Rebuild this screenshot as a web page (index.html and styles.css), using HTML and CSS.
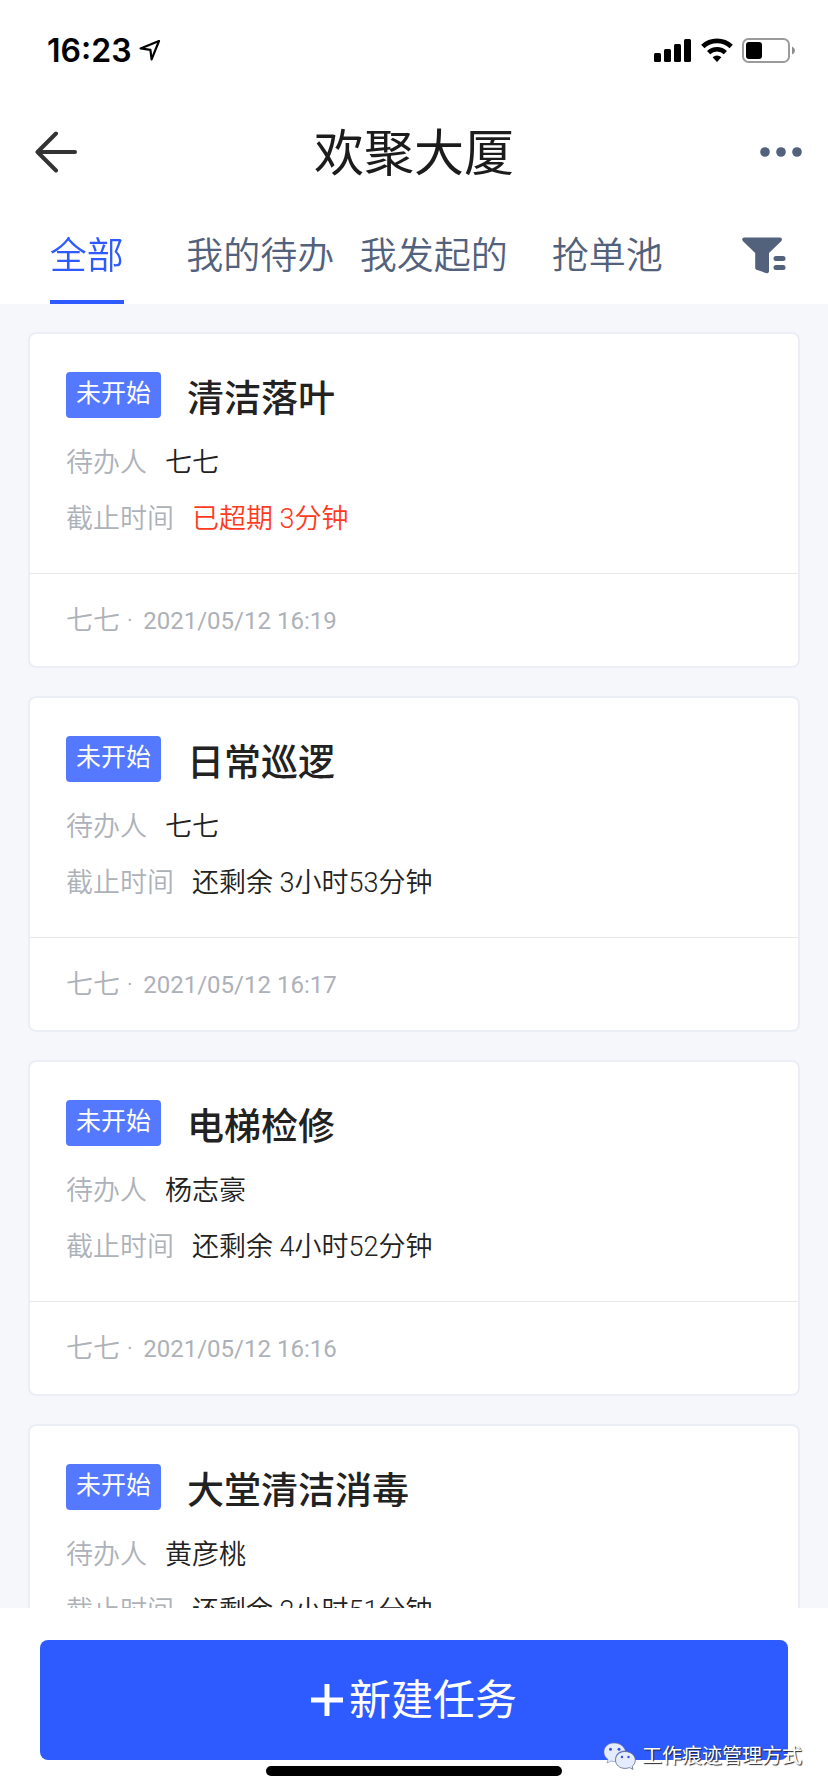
FILE: index.html
```html
<!DOCTYPE html>
<html lang="zh-CN">
<head>
    <meta charset="UTF-8">
    <meta name="viewport" content="width=device-width, initial-scale=1.0">
    <title>欢聚大厦</title>
    <link rel="stylesheet" href="styles.css">
</head>
<body>

    <!-- 状态栏 -->
    <div class="status-bar">
        <div class="status-left">
            <span class="clock">16:23</span>
            <svg width="22" height="22" viewBox="0 0 22 22" fill="none" stroke="#000" stroke-width="2.2" stroke-linejoin="round">
                <path d="M20 2L1.6 9.4L11.4 10.8L12.6 20.4Z"/>
            </svg>
        </div>
        <div class="status-right">
            <svg width="38" height="24" viewBox="0 0 38 24">
                <rect x="0" y="15" width="7" height="9" rx="1.5"/>
                <rect x="10" y="11" width="7" height="13" rx="1.5"/>
                <rect x="20" y="6" width="7" height="18" rx="1.5"/>
                <rect x="30" y="1" width="7" height="23" rx="1.5"/>
            </svg>
            <svg width="32" height="24" viewBox="0 0 32 24">
                <path d="M1.8 8.6A20.5 20.5 0 0 1 30.2 8.6" fill="none" stroke="#000" stroke-width="4.8"/>
                <path d="M7.6 14.6A12.2 12.2 0 0 1 24.4 14.6" fill="none" stroke="#000" stroke-width="4.6"/>
                <path d="M11.6 19.2A6.5 6.5 0 0 1 20.4 19.2L16 24Z"/>
            </svg>
            <svg width="53" height="25" viewBox="0 0 53 25">
                <rect x="1" y="1" width="46" height="23" rx="5.5" fill="none" stroke="#9b9b9b" stroke-width="2"/>
                <rect x="4" y="4" width="16" height="17" rx="3"/>
                <path d="M50 8.5Q53 10 53 12.5Q53 15 50 16.5Z" fill="#8c8c8c"/>
            </svg>
        </div>
    </div>

    <!-- 标题栏 -->
    <header class="nav-bar">
        <button class="icon-button" type="button" aria-label="返回">
            <svg width="42" height="42" viewBox="0 0 42 42" fill="none" stroke="#333" stroke-width="4" stroke-linecap="round" stroke-linejoin="round">
                <path d="M21 2.5L2.5 21L21 39.5M2.5 21H40"/>
            </svg>
        </button>
        <h1>欢聚大厦</h1>
        <button class="icon-button" type="button" aria-label="更多">
            <svg width="42" height="42" viewBox="0 0 42 42" fill="#52617c">
                <circle cx="5" cy="21" r="4.8"/>
                <circle cx="21" cy="21" r="4.8"/>
                <circle cx="37" cy="21" r="4.8"/>
            </svg>
        </button>
    </header>

    <!-- 分类标签 -->
    <nav class="tabs">
        <a class="tab active" href="#all">全部</a>
        <a class="tab" href="#todo">我的待办</a>
        <a class="tab" href="#created">我发起的</a>
        <a class="tab" href="#pool">抢单池</a>
        <button class="filter" type="button" aria-label="筛选">
            <svg width="44" height="37" viewBox="0 0 44 37" fill="#52617c">
                <path d="M2 0.5H38Q41 1 39.4 4L27 16V34.5Q26.6 36.8 24.5 36.2L14.5 32.8Q13.2 32.2 13.2 31V16L0.8 4Q-0.8 1 2 0.5Z"/>
                <rect x="31.5" y="19" width="12" height="5" rx="2.5"/>
                <rect x="31.5" y="28" width="12" height="5" rx="2.5"/>
            </svg>
        </button>
    </nav>

    <!-- 任务列表 -->
    <main class="task-list">
        <article class="card">
            <div class="card-body">
                <div class="card-head">
                    <span class="tag">未开始</span>
                    <h2>清洁落叶</h2>
                </div>
                <p class="row"><span class="label">待办人</span><span>七七</span></p>
                <p class="row"><span class="label">截止时间</span><span class="overdue">已超期 3分钟</span></p>
            </div>
            <footer class="card-foot"><span>七七 ·</span><time>2021/05/12 16:19</time></footer>
        </article>

        <article class="card">
            <div class="card-body">
                <div class="card-head">
                    <span class="tag">未开始</span>
                    <h2>日常巡逻</h2>
                </div>
                <p class="row"><span class="label">待办人</span><span>七七</span></p>
                <p class="row"><span class="label">截止时间</span><span>还剩余 3小时53分钟</span></p>
            </div>
            <footer class="card-foot"><span>七七 ·</span><time>2021/05/12 16:17</time></footer>
        </article>

        <article class="card">
            <div class="card-body">
                <div class="card-head">
                    <span class="tag">未开始</span>
                    <h2>电梯检修</h2>
                </div>
                <p class="row"><span class="label">待办人</span><span>杨志豪</span></p>
                <p class="row"><span class="label">截止时间</span><span>还剩余 4小时52分钟</span></p>
            </div>
            <footer class="card-foot"><span>七七 ·</span><time>2021/05/12 16:16</time></footer>
        </article>

        <article class="card">
            <div class="card-body">
                <div class="card-head">
                    <span class="tag">未开始</span>
                    <h2>大堂清洁消毒</h2>
                </div>
                <p class="row"><span class="label">待办人</span><span>黄彦桃</span></p>
                <p class="row"><span class="label">截止时间</span><span>还剩余 2小时51分钟</span></p>
            </div>
        </article>
    </main>

    <!-- 底部操作 -->
    <div class="bottom-bar">
        <button class="create-button" type="button">
            <svg width="32" height="32" viewBox="0 0 32 32" stroke="#fff" stroke-width="5">
                <path d="M16 0V32M0 16H32"/>
            </svg>
            <span>新建任务</span>
        </button>
        <div class="home-indicator"></div>
        <div class="watermark">
            <svg width="33" height="28" viewBox="0 0 33 28">
                <path d="M11 1C5 1 1 5 1 10C1 13.2 2.6 15.6 5 17.3L4 21L8 19Q11 20 13.5 19.2C11 12 17 8.6 22.4 9C21 4 16.5 1 11 1Z" fill="#e6ecff" stroke="#7382a8" stroke-width="0.6"/>
                <path d="M22 9.5C16.5 9.5 12.5 13.2 12.5 18C12.5 22.8 16.5 26.4 22 26.4Q24.5 26.4 26.5 25.6L30 27.4L29.2 24.2C31.3 22.6 32.3 20.4 32.3 18C32.3 13.2 27.5 9.5 22 9.5Z" fill="#e6ecff" stroke="#5d6885" stroke-width="0.8"/>
                <g fill="#2f56dc">
                    <circle cx="7.5" cy="7.3" r="1.5"/>
                    <circle cx="16" cy="7.3" r="1.5"/>
                    <circle cx="19" cy="15" r="1.2"/>
                    <circle cx="25.5" cy="15" r="1.2"/>
                </g>
            </svg>
            <span>工作痕迹管理方式</span>
        </div>
    </div>

</body>
</html>
```
FILE: styles.css
```css
/* 基础样式 */
* {
    box-sizing: border-box;
}

body {
    margin: 0;
    height: 100vh;
    display: flex;
    flex-direction: column;
    background: #fff;
    color: #222;
    font-family: Roboto, "Noto Sans CJK SC", sans-serif;
    font-weight: 350;
}

h1, h2, p {
    margin: 0;
}

svg {
    display: block;
    flex: none;
}

button {
    padding: 0;
    border: 0;
    background: none;
    font: inherit;
    cursor: pointer;
}

/* 状态栏 */
.status-bar {
    height: 100px;
    padding: 0 33px 0 47px;
    display: flex;
    justify-content: space-between;
    align-items: center;
}

.status-left {
    display: flex;
    align-items: center;
    gap: 7px;
}

.status-right {
    display: flex;
    align-items: center;
    gap: 9px;
}

.clock {
    font-family: Inter, sans-serif;
    font-size: 32px;
    font-weight: 600;
    color: #000;
}

/* 标题栏 */
.nav-bar {
    height: 104px;
    padding: 0 26px;
    display: flex;
    justify-content: space-between;
    align-items: center;
}

.nav-bar h1 {
    padding-top: 4px;
    font-size: 50px;
    line-height: 72px;
    font-weight: 400;
    color: #1c1c1c;
}

.icon-button {
    width: 51px;
    display: flex;
    justify-content: flex-end;
}

/* 分类标签 */
.tabs {
    height: 100px;
    display: flex;
}

.tab {
    flex: 1;
    display: flex;
    flex-direction: column;
    align-items: center;
    font-size: 37px;
    line-height: 106px;
    white-space: nowrap;
    color: #52617c;
    text-decoration: none;
}

.tab.active {
    color: #2e5bff;
    position: relative;
}

.tab.active::after {
    content: "";
    position: absolute;
    bottom: 0;
    width: 74px;
    height: 4px;
    background: #2e5bff;
}

.filter {
    width: 134px;
    padding: 2px 0 0 6px;
    display: flex;
    justify-content: center;
    align-items: center;
}

/* 任务列表 */
.task-list {
    flex: 1;
    min-height: 0;
    padding: 28px;
    overflow-y: auto;
    scrollbar-width: none;
    background: #f5f7fb;
}

.card {
    margin-bottom: 28px;
    background: #fff;
    border: 2px solid #ebeef5;
    border-radius: 8px;
}

.card-body {
    padding: 38px 36px 26px;
}

.card-head {
    display: flex;
    gap: 26px;
    margin-bottom: 7px;
}

.tag {
    height: 46px;
    padding: 0 10px;
    border-radius: 4px;
    background: #5479ff;
    color: #fff;
    font-size: 25px;
    line-height: 44px;
    font-weight: 400;
}

.card-head h2 {
    font-size: 37px;
    line-height: 56px;
    font-weight: 500;
}

.row {
    display: flex;
    gap: 18px;
    font-size: 27px;
    line-height: 56px;
}

.label {
    color: #adb1b8;
}

.overdue {
    color: #ff3b1f;
}

.card-foot {
    padding: 2px 36px 0;
    display: flex;
    gap: 10px;
    border-top: 1px solid #e6e8ec;
    color: #adb1b8;
    font-size: 27px;
    line-height: 90px;
}

.card-foot time {
    font-size: 24px;
    font-weight: 400;
}

/* 底部操作 */
.bottom-bar {
    position: relative;
    padding: 32px 40px 16px;
    background: #fff;
}

.create-button {
    width: 100%;
    height: 120px;
    display: flex;
    justify-content: center;
    align-items: center;
    gap: 6px;
    border-radius: 8px;
    background: #2e5bff;
    color: #fff;
    font-size: 42px;
    line-height: 60px;
    font-weight: 400;
}

.create-button span {
    padding-top: 2px;
}

.home-indicator {
    width: 296px;
    height: 10px;
    margin: 6px auto 0;
    border-radius: 5px;
    background: #000;
}

.watermark {
    position: absolute;
    right: 26px;
    bottom: 22px;
    display: flex;
    align-items: center;
    gap: 6px;
    color: #fff;
    font-size: 20px;
    line-height: 28px;
    font-weight: 400;
    text-shadow: 1px 1px 1px #222;
}
```
